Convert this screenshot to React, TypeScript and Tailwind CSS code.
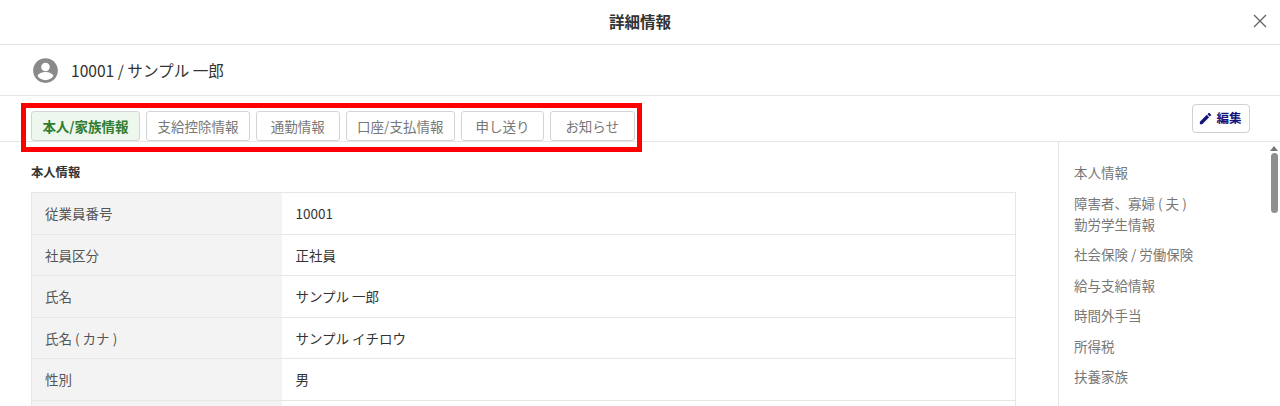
import React from 'react';

const tabs = ['本人/家族情報', '支給控除情報', '通勤情報', '口座/支払情報', '申し送り', 'お知らせ'];
const tabWidths = ['w-[109px]', 'w-[104px]', 'w-[83.500px]', 'w-[109.500px]', 'w-[83px]', 'w-[84.500px]'];

const rows = [
    ['従業員番号', '10001'],
    ['社員区分', '正社員'],
    ['氏名', 'サンプル 一郎'],
    ['氏名 ( カナ )', 'サンプル イチロウ'],
    ['性別', '男'],
    ['', ''],
];

const sideLinks = [
    ['本人情報'],
    ['障害者、寡婦 ( 夫 )', '勤労学生情報'],
    ['社会保険 / 労働保険'],
    ['給与支給情報'],
    ['時間外手当'],
    ['所得税'],
    ['扶養家族'],
];

export default function App() {
    return (
        <div className="relative h-[406px] w-[1280px] overflow-hidden bg-white text-[13.5px] text-[#333] font-['Noto_Sans_CJK_JP','Noto_Sans',sans-serif]">
            {/* header */}
            <div className="relative flex h-[45px] items-center justify-center border-b border-[#e3e3e3]">
                <span className="text-[15.5px] font-bold text-[#333]">詳細情報</span>
                <button className="absolute right-[12px] top-[13px] text-[#666]">
                    <svg width="16" height="16" viewBox="0 0 16 16" fill="none" stroke="currentColor" strokeWidth="1.4">
                        <path d="M2 2l12 12M14 2L2 14" />
                    </svg>
                </button>
            </div>

            {/* employee */}
            <div className="flex h-[51px] items-center gap-[12px] border-b border-[#e6e6e6] pl-[32px]">
                <svg width="27" height="27" viewBox="0 0 24 24" fill="#8a8a8a">
                    <path d="M12 1C5.900 1 1 5.900 1 12s4.900 11 11 11 11-4.900 11-11S18.100 1 12 1zm0 4c2.200 0 3.800 1.700 3.800 3.800S14.200 12.700 12 12.700s-3.800-1.700-3.800-3.900S9.800 5 12 5zm0 15.600c-2.900 0-5.500-1.400-7-3.700 0-2.300 4.700-3.600 7-3.600s7 1.300 7 3.600c-1.500 2.300-4.100 3.700-7 3.700z" />
                </svg>
                <span className="pt-[1px] text-[15.600px] text-[#333]">10001 / サンプル 一郎</span>
            </div>

            {/* tabs */}
            <div className="flex h-[46px] items-end justify-between border-b border-[#e6e6e6] pl-[31px] pr-[30px]">
                <div className="flex gap-[6px]">
                    {tabs.map((tab, i) => (
                        <div
                            key={tab}
                            className={`flex h-[30px] items-center justify-center rounded-[3px] border border-[#d4d4d4] ${tabWidths[i]} ${i === 0 ? 'bg-[#eef7ee] font-bold text-[#2e7d32]' : 'bg-white text-[#777]'}`}
                        >
                            {tab}
                        </div>
                    ))}
                </div>
                <button className="mb-[8px] flex h-[29px] w-[58px] items-center justify-center gap-[3px] rounded-[4px] border border-[#d0d0d0] bg-white pr-[2px] text-[12.500px] font-bold text-[#14147a]">
                    <svg width="15" height="15" viewBox="0 0 24 24" fill="currentColor">
                        <path d="M3 17.250V21h3.750L17.810 9.940l-3.750-3.750L3 17.250zM20.710 7.040a1 1 0 000-1.410l-2.340-2.340a1 1 0 00-1.410 0l-1.830 1.830 3.750 3.750 1.830-1.830z" />
                    </svg>
                    編集
                </button>
            </div>

            {/* body */}
            <div className="flex h-[264px]">
                <div className="w-[1058px] pl-[31px] pr-[42px]">
                    <h3 className="mt-[21px] mb-[11px] text-[12.300px] leading-[18px] font-bold text-[#333]">本人情報</h3>
                    <table className="w-full border-collapse border border-[#e6e6e6]">
                        <tbody>
                            {rows.map(([label, value], i) => (
                                <tr key={i} className="h-[41.500px] border-b border-[#e6e6e6]">
                                    <th className="w-[250px] bg-[#f3f3f3] pl-[13px] text-left font-normal text-[#555]">{label}</th>
                                    <td className="pl-[14px] text-[#333]">{value}</td>
                                </tr>
                            ))}
                        </tbody>
                    </table>
                </div>
                <div className="flex flex-1 border-l border-[#e6e6e6]">
                    <nav className="flex flex-1 flex-col gap-[9.500px] pl-[15px] pt-[20px] text-[#777]">
                        {sideLinks.map((lines) => (
                            <div key={lines[0]} className="leading-[21px]">
                                {lines.map((line) => (
                                    <div key={line}>{line}</div>
                                ))}
                            </div>
                        ))}
                    </nav>
                    <div className="flex w-[12px] flex-col items-center bg-white pt-[4px]">
                        <div className="h-0 w-0 border-x-[4px] border-b-[5px] border-x-transparent border-b-[#777]" />
                        <div className="mt-[2px] h-[60px] w-[7px] rounded-full bg-[#8f8f8f]" />
                    </div>
                </div>
            </div>

            {/* red callout */}
            <div className="pointer-events-none absolute left-[21px] top-[103px] h-[49px] w-[621px] border-[5px] border-[#ff0000]" />
        </div>
    );
}
